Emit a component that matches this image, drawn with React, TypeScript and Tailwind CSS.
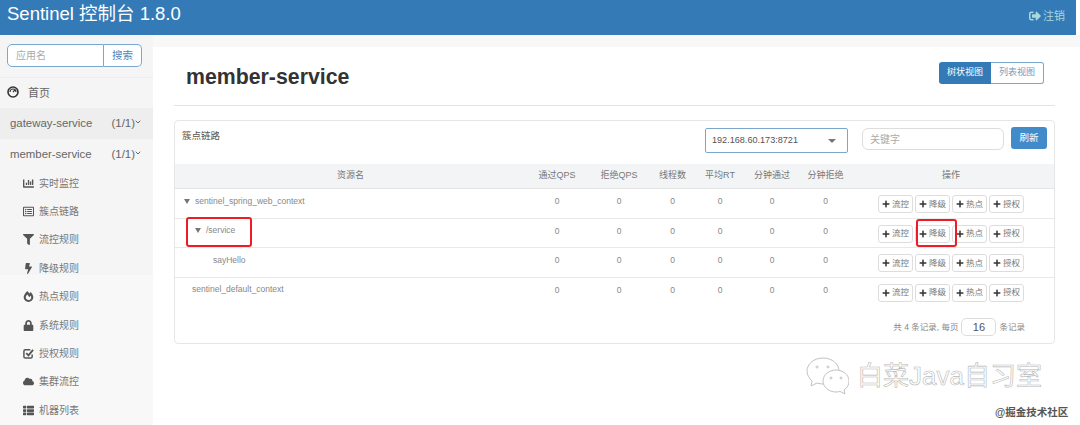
import { FaBolt, FaChartBar, FaCloud, FaFilter, FaFireAlt, FaLock, FaPlus, FaRegListAlt, FaSignOutAlt, FaThList } from "react-icons/fa";
import { ChevronDown } from "lucide-react";
import type { ComponentType } from "react";

const CheckIcon = ({ className }: { className?: string }) => (
	<svg viewBox="0 0 12 12" className={`h-[11px] w-[11px] ${className ?? ""}`} fill="none" stroke="currentColor">
		<path d="M10 7v2.500a1.500 1.500 0 0 1-1.500 1.500h-6A1.500 1.500 0 0 1 1 9.500v-6A1.500 1.500 0 0 1 2.500 2H8" strokeWidth="1.6" />
		<path d="M3.500 5.500L6 8l5-6" strokeWidth="2" />
	</svg>
);

const menu: [ComponentType<{ className?: string }>, string][] = [
	[FaChartBar, "实时监控"],
	[FaRegListAlt, "簇点链路"],
	[FaFilter, "流控规则"],
	[FaBolt, "降级规则"],
	[FaFireAlt, "热点规则"],
	[FaLock, "系统规则"],
	[CheckIcon, "授权规则"],
	[FaCloud, "集群流控"],
	[FaThList, "机器列表"],
];

const colClass = "grid grid-cols-[351px_62px_62px_45px_50px_54px_53px_198px] text-center";

const Arrow = () => (
	<span className="mr-[5px] inline-block h-0 w-0 border-x-[3px] border-t-[5px] border-x-transparent border-t-[#777]" />
);

const ActionButtons = () => (
	<div className="flex justify-center gap-[2px] pt-[6px]">
		{["流控", "降级", "热点", "授权"].map((label) => (
			<button
				key={label}
				className="flex h-[18px] w-[35px] items-center justify-center gap-[2px] rounded-[3px] border border-[#ddd] bg-white text-[8.5px] text-[#777]"
			>
				<FaPlus className="text-[8px] text-[#333]" />
				{label}
			</button>
		))}
	</div>
);

const rows = [
	{ key: "web", name: "sentinel_spring_web_context", arrow: true, pad: "pl-[9px]", line: "border-b border-[#e8e8e8]" },
	{ key: "service", name: "/service", arrow: true, pad: "pl-[20px]", line: "border-b border-[#e8e8e8]" },
	{ key: "hello", name: "sayHello", arrow: false, pad: "pl-[38px]", line: "border-b border-[#e8e8e8]" },
	{ key: "default", name: "sentinel_default_context", arrow: false, pad: "pl-[17px]", line: "" },
];

const Sidebar = () => (
	<aside className="h-full w-[153px] shrink-0 bg-[linear-gradient(#f5f5f5_240px,#f8f8f8_240px)] text-[#666]">
		<div className="h-[43px] border-b border-[#eee] pl-[7px] pt-[9px]">
			<div className="flex h-[23px] w-[135px] text-[10px]">
				<input
					placeholder="应用名"
					className="w-[97px] rounded-l-[5px] border border-[#7ba7cf] bg-white pl-[8px] outline-none placeholder:text-[#aaa]"
				/>
				<button className="flex-1 rounded-r-[5px] border border-l-0 border-[#7ba7cf] bg-white text-[10.5px] text-[#4f86b8]">搜索</button>
			</div>
		</div>
		<div className="flex h-[30px] items-center pl-[7px] text-[11px]">
			<svg viewBox="0 0 12 12" className="mb-[2px] mr-[9px] h-[12px] w-[12px] text-[#333]" fill="none" stroke="currentColor">
				<circle cx="6" cy="6" r="5" strokeWidth="1.6" />
				<path d="M3 6a3 3 0 0 1 6 0M6 6l2-2.2" strokeWidth="1.2" />
			</svg>
			首页
		</div>
		<div className="flex h-[31px] items-center bg-[#eeeeee] pl-[10px] pr-[11px] pt-[1px] text-[11.4px]">
			<span className="flex-1">gateway-service</span>
			<span className="mr-[-1px]">(1/1)</span>
			<ChevronDown className="mb-[5px] h-[8px] w-[8px]" strokeWidth={3} />
		</div>
		<div className="flex h-[31px] items-center pl-[10px] pr-[11px] pt-[1px] text-[11.4px]">
			<span className="flex-1">member-service</span>
			<span className="mr-[-1px]">(1/1)</span>
			<ChevronDown className="mb-[5px] h-[8px] w-[8px]" strokeWidth={3} />
		</div>
		<ul className="-mt-[1px]">
			{menu.map(([Icon, label]) => (
				<li key={label} className="flex h-[28.4px] items-center pl-[23px] text-[10px] text-[#777]">
					<span className="mr-[5px] flex w-[11px] justify-center text-[#555]">
						<Icon className="text-[11px]" />
					</span>
					{label}
				</li>
			))}
		</ul>
	</aside>
);

const ResourceCard = () => (
	<section className="mt-[14px] h-[224px] rounded-[4px] border border-[#e6e6e6]">
		<div className="flex h-[43px] pl-[7px]">
			<span className="mt-[8px] w-[523px] text-[9.5px] text-[#555]">簇点链路</span>
			<div className="mt-[7px] flex h-[25px] w-[143px] items-center justify-between rounded-[2px] border border-[#7ba7cf] pl-[6px] pr-[11px] text-[9.1px] text-[#555]">
				192.168.60.173:8721
				<span className="h-0 w-0 border-x-[4px] border-t-[4px] border-x-transparent border-t-[#777]" />
			</div>
			<input
				placeholder="关键字"
				className="ml-[14px] mt-[7px] h-[22px] w-[142px] rounded-[6px] border border-[#ddd] pl-[7px] text-[10px] outline-none placeholder:text-[#aaa]"
			/>
			<button className="ml-[7px] mt-[6px] h-[22px] w-[36px] rounded-[3px] bg-[#428bca] text-[9.5px] text-white">刷新</button>
		</div>
		<div className={`${colClass} h-[25px] items-center border-b border-[#e4e4e4] bg-[#f3f4f5] text-[9px] text-[#777]`}>
			{["资源名", "通过QPS", "拒绝QPS", "线程数", "平均RT", "分钟通过", "分钟拒绝", "操作"].map((title) => (
				<span key={title}>{title}</span>
			))}
		</div>
		{rows.map((row) => (
			<div key={row.key} className={`${colClass} ${row.line} h-[29.6px] text-[8.5px] text-[#888]`}>
				<div className={`${row.pad} flex h-[24px] items-center text-left`}>
					{row.arrow && <Arrow />}
					<span>{row.name}</span>
				</div>
				{[0, 1, 2, 3, 4, 5].map((n) => (
					<span key={n} className="leading-[24px]">0</span>
				))}
				<ActionButtons />
			</div>
		))}
		<div className="flex items-center justify-end gap-[3px] pr-[29px] pt-[11px] text-[8.5px] text-[#888]">
			共 4 条记录, 每页
			<span className="flex h-[18px] w-[35px] items-center justify-center rounded-[5px] border border-[#ddd] text-[11px] text-[#555]">16</span>
			条记录
		</div>
	</section>
);

const Watermark = () => (
	<div className="pointer-events-none absolute left-[805px] top-[357px] flex items-center">
		<svg viewBox="0 0 44 38" className="h-[38px] w-[44px]" fill="#fff" stroke="#c2c2c2" strokeWidth="1">
			<path d="M18 1C9 1 2 7 2 14c0 4 2 7 5 10l-1 5 6-3c2 .6 4 1 6 1 9 0 16-6 16-13S27 1 18 1z" />
			<path d="M31 13c-7 0-13 5-13 11s6 11 13 11c1.500 0 3-.2 4-.6l5 2.600-1-4c3-2 5-5 5-9 0-6-6-11-13-11z" />
			<circle cx="12" cy="10" r="1" />
			<circle cx="23" cy="10" r="1" />
			<circle cx="26" cy="21" r="1" />
			<circle cx="36" cy="21" r="1" />
		</svg>
		<span className="ml-[8px] text-[26px] leading-none text-white [-webkit-text-stroke:0.6px_#b8b8b8]">白菜Java自习室</span>
	</div>
);

export default function App() {
	return (
		<div className="relative h-[425px] w-[1080px] overflow-hidden bg-white font-['Liberation_Sans','Noto_Sans_CJK_SC',sans-serif]">
			<header className="mr-[4px] flex h-[35px] justify-between bg-[#337ab7] pl-[7px] pr-[11px]">
				<span className="text-[18.5px] leading-[27px] text-white">Sentinel 控制台 1.8.0</span>
				<span className="flex items-center gap-[2px] pb-[3px] text-[11px] text-[#a9d9d9]">
					<FaSignOutAlt className="text-[12px]" />
					注销
				</span>
			</header>
			<div className="flex h-[390px]">
				<Sidebar />
				<main className="flex-1">
					<div className="h-[12px] bg-[#f8f8f8]" />
					<div className="pl-[21px] pr-[25px]">
						<div className="flex h-[59px] items-start justify-between border-b border-[#e4e4e4] pr-[11px]">
							<h1 className="ml-[12px] mt-[17px] text-[21.3px] font-bold leading-[27px] text-[#333]">member-service</h1>
							<div className="mt-[15px] flex h-[22px] text-[9px]">
								<button className="w-[52px] rounded-l-[3px] bg-[#337ab7] text-white">树状视图</button>
								<button className="w-[53px] rounded-r-[3px] border border-l-0 border-[#7ba7cf] text-[#6f9cc4]">列表视图</button>
							</div>
						</div>
						<ResourceCard />
					</div>
				</main>
			</div>
			<div className="absolute left-[186px] top-[217px] h-[30px] w-[66px] rounded-[3px] border-2 border-[#ee1c25]" />
			<div className="absolute left-[916px] top-[219px] h-[28px] w-[41px] rounded-[3px] border-2 border-[#ee1c25]" />
			<Watermark />
			<span className="absolute left-[995px] top-[405px] text-[10.5px] font-bold text-[#555]">@掘金技术社区</span>
		</div>
	);
}
